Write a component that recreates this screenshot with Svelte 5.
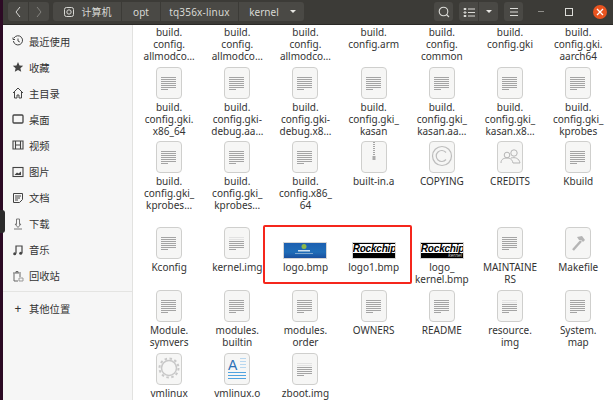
<script>
  const places = [
    { name: "最近使用", icon: "clock" },
    { name: "收藏", icon: "star" },
    { name: "主目录", icon: "home" },
    { name: "桌面", icon: "desk" },
    { name: "视频", icon: "film" },
    { name: "图片", icon: "photo" },
    { name: "文档", icon: "docs" },
    { name: "下载", icon: "down" },
    { name: "音乐", icon: "music" },
    { name: "回收站", icon: "trash" }
  ];

  const rows = [
    {
      height: 42,
      files: [
        { lines: ["build.", "config.", "allmodco…"], kind: "none" },
        { lines: ["build.", "config.", "allmodco…"], kind: "none" },
        { lines: ["build.", "config.", "allmodco…"], kind: "none" },
        { lines: ["build.", "config.arm"], kind: "none" },
        { lines: ["build.", "config.", "common"], kind: "none" },
        { lines: ["build.", "config.gki"], kind: "none" },
        { lines: ["build.", "config.gki.", "aarch64"], kind: "none" }
      ]
    },
    {
      height: 74,
      files: [
        { lines: ["build.", "config.gki.", "x86_64"] },
        { lines: ["build.", "config.gki-", "debug.aa…"] },
        { lines: ["build.", "config.gki-", "debug.x8…"] },
        { lines: ["build.", "config.gki_", "kasan"] },
        { lines: ["build.", "config.gki_", "kasan.aa…"] },
        { lines: ["build.", "config.gki_", "kasan.x8…"] },
        { lines: ["build.", "config.gki_", "kprobes"] }
      ]
    },
    {
      height: 86,
      files: [
        { lines: ["build.", "config.gki_", "kprobes…"] },
        { lines: ["build.", "config.gki_", "kprobes…"] },
        { lines: ["build.", "config.x86_", "64"] },
        { lines: ["built-in.a"], kind: "zip" },
        { lines: ["COPYING"], kind: "copy" },
        { lines: ["CREDITS"], kind: "people" },
        { lines: ["Kbuild"] }
      ]
    },
    {
      height: 63,
      files: [
        { lines: ["Kconfig"] },
        { lines: ["kernel.img"], kind: "faint" },
        { lines: ["logo.bmp"], kind: "splash" },
        { lines: ["logo1.bmp"], kind: "rock" },
        { lines: ["logo_", "kernel.bmp"], kind: "rockKernel" },
        { lines: ["MAINTAINE", "RS"] },
        { lines: ["Makefile"], kind: "hammer" }
      ]
    },
    {
      height: 63,
      files: [
        { lines: ["Module.", "symvers"] },
        { lines: ["modules.", "builtin"] },
        { lines: ["modules.", "order"] },
        { lines: ["OWNERS"] },
        { lines: ["README"] },
        { lines: ["resource.", "img"], kind: "faint" },
        { lines: ["System.", "map"] }
      ]
    },
    {
      height: 46,
      files: [
        { lines: ["vmlinux"], kind: "gear" },
        { lines: ["vmlinux.o"], kind: "font" },
        { lines: ["zboot.img"], kind: "faint" }
      ]
    }
  ];

  const textLines = [10.5, 12.5, 14.5, 16.5, 18.5, 20.5, 22.5];
</script>

{#snippet placeIcon(icon)}
  <svg class="place-icon" viewBox="0 0 12 12" fill="none" stroke="#444" stroke-width="1">
    {#if icon === "clock"}
      <path d="M2 3a4.6 4.6 0 1 1-.6 3M1 2.5v2h2M6 3.5V6l1.8 1" />
    {:else if icon === "star"}
      <path fill="#444" stroke="none" d="M6 1l1.5 3.4 3.7.4-2.8 2.4.8 3.6L6 9l-3.2 1.8.8-3.6L.8 4.8l3.7-.4z" />
    {:else if icon === "home"}
      <path d="M1 6l5-5 5 5M2.5 5v6H5V8h2v3h2.5V5" />
    {:else if icon === "desk"}
      <rect x="1" y="2" width="10" height="8" rx="1" stroke-width="1.3" />
    {:else if icon === "film"}
      <path d="M1 2h10v8H1zM3.5 2v8M8.5 2v8M3.5 6h5" stroke-width="1.1" />
    {:else if icon === "photo"}
      <rect x="1" y="1.5" width="10" height="9" stroke-width="1.1" />
      <path fill="#444" stroke="none" d="M2.5 9L5 6.5l1.5 1L9 5.5V9z" />
    {:else if icon === "docs"}
      <path d="M1.5 1.5h9v6l-3 3h-6zM3 4h6M3 6h5M3 8h3" />
    {:else if icon === "down"}
      <path stroke="#777" d="M4.5 1h3v5.5L9 6 6 9.5 3 6l1.5.5zM2 11h8" />
    {:else if icon === "music"}
      <path stroke-width="1.2" d="M4 9.5V2h6v7" />
      <circle cx="2.7" cy="9.7" r="1.5" fill="#444" stroke="none" />
      <circle cx="8.7" cy="9.2" r="1.5" fill="#444" stroke="none" />
    {:else if icon === "trash"}
      <path stroke="#666" d="M1 3h8M4 3V1.5h2V3M2 3.5V11h4M8 4v3" />
      <path stroke="#999" d="M7 8h4v3H7z" />
    {/if}
  </svg>
{/snippet}

{#snippet fileIcon(kind)}
  {#if kind === "splash"}
    <div class="thumb splash">
      <svg viewBox="0 0 40 13" width="40" height="13">
        <circle cx="20" cy="3.5" r="2.5" fill="#8db84a" />
        <rect x="14" y="7" width="12" height="1.5" fill="#cfe0ee" />
        <rect x="11" y="10" width="18" height="1" fill="#7fa8d0" />
      </svg>
    </div>
  {:else if kind === "rock" || kind === "rockKernel"}
    <div class="thumb rock">
      <span class="rock-name">Rockchip</span>
      {#if kind === "rockKernel"}<span class="rock-sub">kernel</span>{/if}
    </div>
  {:else}
    <svg class="file" viewBox="0 0 26 32" width="26" height="32">
      <rect x="0.5" y="0.5" width="25" height="31" rx="3.5" fill="#f6f6f5" stroke="#cfcfcd" />
      {#if kind === "zip"}
        <path d="M13 1v18" stroke="#8a8a8a" stroke-width="1.5" stroke-dasharray="1 1" />
        <rect x="11.5" y="15" width="3" height="4" fill="#aaa" />
      {:else if kind === "copy"}
        <circle cx="13" cy="15" r="9.5" fill="none" stroke="#bdbdbd" stroke-width="1.2" />
        <path d="M17 11.5a5.5 5.5 0 1 0 0 7" fill="none" stroke="#bdbdbd" stroke-width="1.2" />
      {:else if kind === "people"}
        <g fill="none" stroke="#b5b5b5">
          <circle cx="10" cy="14" r="2.8" />
          <circle cx="17" cy="12" r="3.2" />
          <path d="M4 22c0-4 3-5 6-5s5 1 6 5M14 17c4-1 8 0 9 5h-7" />
        </g>
      {:else if kind === "hammer"}
        <path d="M8 23l8-9" stroke="#b5b5b5" stroke-width="2.5" />
        <path d="M12 10l5-1 3 4-2 2-2-2h-2z" fill="#b5b5b5" />
      {:else if kind === "gear"}
        <circle cx="13" cy="15" r="7.5" fill="none" stroke="#c8c8c8" stroke-width="1.5" />
        <circle cx="13" cy="15" r="9.5" fill="none" stroke="#c8c8c8" stroke-width="2" stroke-dasharray="2.5 2.5" />
      {:else if kind === "font"}
        <text class="font-a" x="4" y="17">A</text>
        <path d="M16 5.5h6M16 8.5h6M16 11.5h6M16 14.5h6" stroke="#b8d7ef" />
        <path d="M4 19.5h18M4 22.5h18M4 25.5h18" stroke="#4fa3e0" />
      {:else if kind !== "none"}
        {#each textLines as y, i}
          <path
            d={`M5 ${y}H${i === 6 ? 12 : 20}`}
            stroke={kind === "faint" && i < 2 ? "#e2e2e2" : "#a4a4a4"} />
        {/each}
      {/if}
    </svg>
  {/if}
{/snippet}

<div class="desktop">
  <div class="dock-edge">
    <div class="dock-handle"></div>
  </div>

  <div class="window">
    <header>
      <div class="group">
        <button class="nav"><svg viewBox="0 0 8 12" width="8" height="12"><path d="M6 1L2 6l4 5" fill="none" stroke="#d8d8d4" /></svg></button>
        <button class="nav"><svg viewBox="0 0 8 12" width="8" height="12"><path d="M2 1l4 5-4 5" fill="none" stroke="#84837f" /></svg></button>
      </div>
      <div class="path">
        <button class="crumb first">
          <svg viewBox="0 0 12 12" width="12" height="12" fill="none" stroke="#d8d8d4"><rect x="1.5" y="1.5" width="9" height="9" rx="2" /><circle cx="6" cy="6" r="2.2" /></svg>
          <span>计算机</span>
        </button>
        <button class="crumb opt">opt</button>
        <button class="crumb tq">tq356x-linux</button>
        <button class="crumb last">kernel<i class="caret"></i></button>
      </div>
      <div class="tools">
        <button class="tool"><svg viewBox="0 0 12 12" width="12" height="12" fill="none" stroke="#dcdcd8" stroke-width="1.1"><circle cx="5.5" cy="5.5" r="4.3" /><path d="M8.5 8.5L11 11" /></svg></button>
        <div class="group">
          <button class="tool"><svg viewBox="0 0 12 12" width="12" height="12" fill="none" stroke="#dcdcd8"><path d="M1 2.5h2v1H1zM5 3h7M1 6h2v1H1zM5 6.5h7M1 9.5h2v1H1zM5 10h7" /></svg></button>
          <button class="tool"><i class="caret"></i></button>
        </div>
        <button class="tool"><svg viewBox="0 0 12 12" width="12" height="12" stroke="#dcdcd8"><path d="M2 2.500h8M2 6h8M2 9.500h8" /></svg></button>
      </div>
      <div class="controls">
        <span class="minimize"></span>
        <span class="maximize"></span>
        <span class="close"><svg viewBox="0 0 8 8" width="8" height="8"><path d="M1 1l6 6M7 1L1 7" stroke="#fff" stroke-width="1.3" /></svg></span>
      </div>
    </header>

    <div class="body">
      <aside>
        <ul>
          {#each places as place}
            <li>{@render placeIcon(place.icon)}<span>{place.name}</span></li>
          {/each}
        </ul>
        <div class="other"><span class="plus">+</span><span>其他位置</span></div>
      </aside>

      <main>
        {#each rows as row}
          <div class="row" style:height="{row.height}px">
            {#each row.files as file}
              <div class="item">
                {#if file.kind !== "none"}
                  <div class="icon-box">{@render fileIcon(file.kind ?? "text")}</div>
                {/if}
                <div class="label">
                  {#each file.lines as line}
                    <div>{line}</div>
                  {/each}
                </div>
              </div>
            {/each}
          </div>
        {/each}
        <div class="selection"></div>
      </main>
    </div>
  </div>
</div>

<style>
  :global(body) {
    margin: 0;
    background: #2c0a24;
  }

  .desktop {
    display: flex;
    width: 613px;
    height: 400px;
    overflow: hidden;
    font-family: "Noto Sans", "Noto Sans CJK SC", sans-serif;
    font-size: 10px;
    color: #333;
  }

  .dock-edge {
    width: 3px;
    flex: none;
    position: relative;
    background: #2c0a24;
  }

  .dock-handle {
    position: absolute;
    left: 0;
    top: 210px;
    width: 5px;
    height: 23px;
    background: #2b2b2b;
    border-radius: 0 3px 3px 0;
    z-index: 2;
  }

  .window {
    flex: 1;
    display: flex;
    flex-direction: column;
    min-width: 0;
  }

  header {
    height: 25px;
    flex: none;
    box-sizing: border-box;
    display: flex;
    align-items: center;
    padding: 0 0 1px 5px;
    background: #3c3b37;
    border-bottom: 1px solid #2a2926;
    color: #d8d8d4;
    font-size: 10px;
  }

  button {
    border: 0;
    margin: 0;
    padding: 0;
    font: inherit;
    color: inherit;
    height: 19px;
    display: flex;
    align-items: center;
    justify-content: center;
    background: #4a4945;
  }

  .group {
    display: flex;
    gap: 1px;
    border-radius: 3px;
    overflow: hidden;
  }

  .nav {
    width: 20px;
  }

  .path {
    display: flex;
    gap: 1px;
    margin-left: 4px;
    border-radius: 3px;
    overflow: hidden;
  }

  .crumb.first {
    width: 68px;
    gap: 7px;
    font-size: 10px;
  }

  .crumb.opt {
    width: 38px;
  }

  .crumb.tq {
    width: 77px;
    letter-spacing: 0.2px;
  }

  .crumb.last {
    width: 65px;
    gap: 11px;
    padding-left: 2px;
  }

  .caret {
    width: 0;
    height: 0;
    border: 3px solid transparent;
    border-top: 3px solid #e6e6e2;
    border-bottom: 0;
  }

  .tools {
    display: flex;
    gap: 6px;
    margin-left: 130px;
  }

  .tool {
    width: 19px;
    border-radius: 3px;
  }

  .group .tool {
    border-radius: 0;
  }

  .controls {
    display: flex;
    align-items: center;
    margin-left: 15px;
  }

  .minimize {
    width: 6px;
    height: 1px;
    background: #8f8e8a;
  }

  .maximize {
    width: 6px;
    height: 6px;
    border: 1px solid #dcdcd8;
    margin-left: 21px;
  }

  .close {
    width: 14px;
    height: 14px;
    margin-left: 20px;
    border-radius: 50%;
    background: #e95420;
    display: flex;
    align-items: center;
    justify-content: center;
  }

  .body {
    flex: 1;
    display: flex;
    min-height: 0;
  }

  aside {
    width: 129px;
    flex: none;
    background: #f6f6f6;
    border-right: 1px solid #e2e2e0;
  }

  ul {
    list-style: none;
    margin: 0;
    padding: 3px 0 0;
    border-bottom: 1px solid #e4e4e2;
    height: 263px;
  }

  li,
  .other {
    height: 26.1px;
    display: flex;
    align-items: center;
    gap: 5px;
    padding-left: 9px;
    font-size: 10.3px;
  }

  .other {
    margin-top: 3px;
  }

  .place-icon {
    width: 12px;
    height: 12px;
    flex: none;
  }

  .plus {
    width: 12px;
    text-align: center;
    font-size: 12px;
  }

  main {
    flex: 1;
    min-width: 0;
    position: relative;
    background: #fff;
    padding-left: 2px;
    overflow: hidden;
  }

  .row {
    display: grid;
    grid-template-columns: repeat(7, 68.2px);
  }

  .item {
    display: flex;
    flex-direction: column;
    align-items: center;
    min-width: 0;
  }

  .icon-box {
    height: 32px;
    display: flex;
    align-items: flex-end;
    justify-content: center;
    margin-bottom: 1px;
  }

  .file {
    display: block;
  }

  .label {
    padding-top: 1px;
    line-height: 12px;
    text-align: center;
    white-space: nowrap;
    font-size: 10px;
    color: #333;
  }

  .thumb {
    width: 44px;
    height: 17px;
    box-sizing: border-box;
    border: 1px solid #d6d6d6;
    overflow: hidden;
    position: relative;
  }

  .splash {
    background: linear-gradient(#1c5fb0, #1f6db8 60%, #1a4f9e);
    display: flex;
  }

  .rock {
    background: #000;
    color: #000;
    padding-top: 1px;
  }

  .rock-name {
    display: block;
    background: #fff;
    height: 9px;
    font: italic 900 10px/9px "Liberation Sans", sans-serif;
    letter-spacing: -0.2px;
    text-align: center;
    white-space: nowrap;
    overflow: hidden;
  }

  .rock-sub {
    position: absolute;
    right: 1px;
    bottom: 0;
    font: italic 5px/6px "Liberation Sans", sans-serif;
    color: #ccc;
  }

  .font-a {
    font: 14px "Liberation Sans", sans-serif;
    fill: #2a6fb5;
  }

  .selection {
    position: absolute;
    left: 130px;
    top: 200px;
    width: 145px;
    height: 55px;
    border: 2px solid #f5261c;
    border-radius: 2px;
  }
</style>
